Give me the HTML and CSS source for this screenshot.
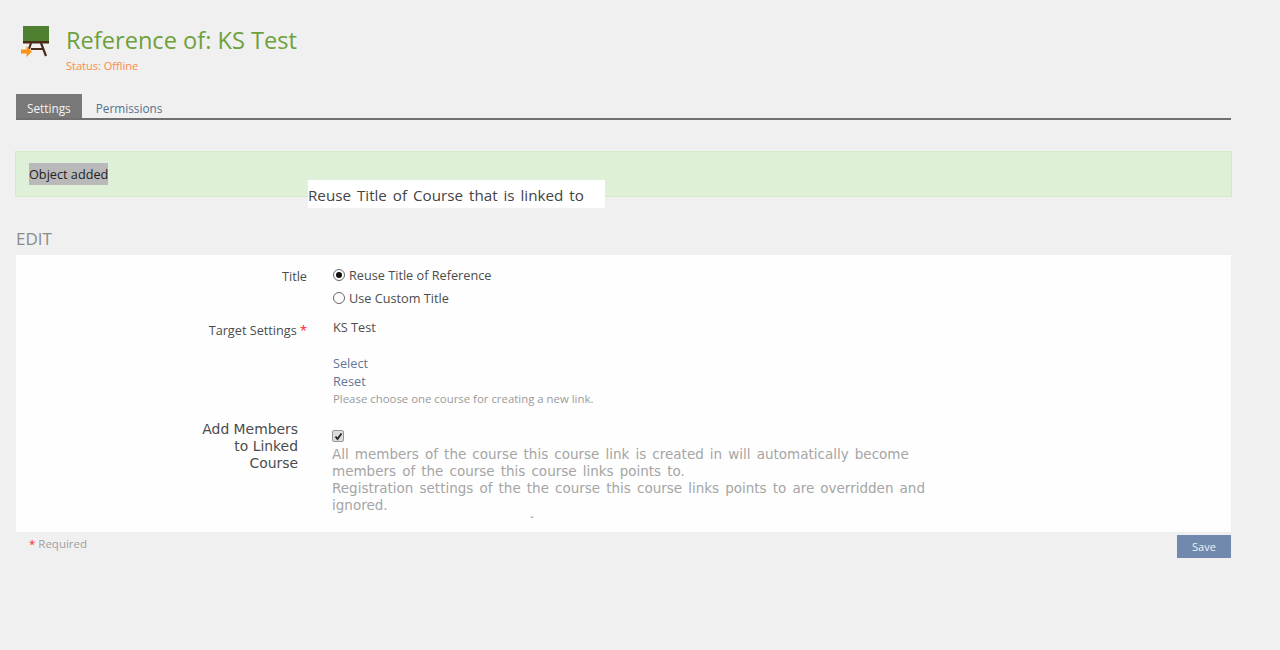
FILE: index.html
```html
<!DOCTYPE html>
<html>
  <head>
    <meta charset="utf-8">
    <title>Reference of: KS Test</title>
    <link rel="stylesheet" href="styles.css">
  </head>
  <body>
    <div id="content">
      <div class="page_header">
        <svg class="page_icon" width="32" height="36" viewBox="0 0 32 36">
          <rect x="3" y="1" width="26" height="15" fill="#4f7f31"/>
          <rect x="3" y="16" width="26" height="2.500" fill="#4a2c1a"/>
          <path d="M11 18 L9 24 M21 18 L26 31 M11 24 H24" stroke="#4a2c1a" stroke-width="2.200" fill="none"/>
          <path d="M1 24.500 H6.500 V21 L12 26.500 L6.500 32 V28.500 H1 Z" fill="#f7931e"/>
        </svg>
        <div>
          <h1>Reference of: KS Test</h1>
          <div class="status">Status: Offline</div>
        </div>
      </div>

      <div class="tabs">
        <span class="tab active">Settings</span>
        <span class="tab">Permissions</span>
      </div>

      <div class="message">
        <span class="selected">Object added</span>
      </div>
      <div class="tooltip">Reuse Title of Course that is linked to</div>

      <h2>EDIT</h2>
      <div class="form">
        <div class="row row_title">
          <div class="label">Title</div>
          <div class="field">
            <div class="option"><span class="radio checked"></span>Reuse Title of Reference</div>
            <div class="option"><span class="radio"></span>Use Custom Title</div>
          </div>
        </div>
        <div class="row row_target">
          <div class="label">Target Settings <span class="req">*</span></div>
          <div class="field">
            <div class="target_name">KS Test</div>
            <div class="link">Select</div>
            <div class="link">Reset</div>
            <div class="info">Please choose one course for creating a new link.</div>
          </div>
        </div>
        <div class="row row_members">
          <div class="label wide">Add Members<br>to Linked<br>Course</div>
          <div class="field">
            <span class="check">
              <svg width="9" height="9" viewBox="0 0 9 9"><path d="M1.500 4.500 L3.500 7 L7.500 1.500" stroke="#222" stroke-width="1.800" fill="none"/></svg>
            </span>
            <div class="help">All members of the course this course link is created in will automatically become members of the course this course links points to.<br>Registration settings of the the course this course links points to are overridden and ignored.</div>
            <div class="tick">˘</div>
          </div>
        </div>
      </div>

      <div class="footer">
        <div class="required"><span class="req">*</span> Required</div>
        <span class="button">Save</span>
      </div>
    </div>
  </body>
</html>
```

FILE: styles.css
```css
html, body {
    margin: 0;
    background: #f0f0f0;
}
body {
    font-family: "Open Sans", sans-serif;
    font-size: 12.700px;
    color: #4c4c4c;
}
#content {
    position: relative;
    width: 1215px;
    margin-left: 16px;
    padding-top: 24px;
}
.page_header {
    display: flex;
    height: 70px;
}
.page_icon {
    margin: 1px 0 0 4px;
    flex: none;
}
.page_header > div {
    margin-left: 14px;
}
h1 {
    margin: 0;
    font-size: 23.600px;
    font-weight: 400;
    line-height: 32px;
    color: #6ea03c;
}
.status {
    margin-top: 2px;
    line-height: 16px;
    font-size: 11px;
    color: #f98b4b;
}
.tabs {
    display: flex;
    height: 24px;
    border-bottom: 2px solid #6f6f6f;
}
.tab {
    padding: 0 14px;
    line-height: 28px;
    font-size: 11.800px;
    color: #55708f;
}
.tab.active {
    padding: 0 11px;
    background: #787878;
    color: #f4f4f4;
}
.message {
    margin: 31px -1px 0 -1px;
    height: 44px;
    padding-left: 13px;
    line-height: 44px;
    background: #dff0d8;
    border: 1px solid #d6e9c6;
    color: #222;
    font-size: 12.700px;
}
.selected {
    background: #b9b9b9;
    padding: 2px 0;
}
.tooltip {
    position: absolute;
    left: 292px;
    top: 180px;
    width: 297px;
    height: 28px;
    line-height: 31px;
    background: #fff;
    font-size: 15.200px;
    word-spacing: 2px;
    color: #444;
    white-space: nowrap;
}
h2 {
    margin: 30px 0 0 0;
    font-size: 17px;
    font-weight: 400;
    line-height: 24px;
    color: #8c8c8c;
}
.form {
    height: 277px;
    margin-top: 4px;
    padding-top: 10px;
    box-sizing: border-box;
    background: #fefefe;
}
.row {
    display: flex;
}
.label {
    width: 291px;
    text-align: right;
    line-height: 22px;
    flex: none;
}
.field {
    margin-left: 26px;
    position: relative;
}
.row_title {
    height: 55px;
}
.option {
    display: flex;
    align-items: center;
    height: 22px;
    margin-bottom: 1px;
    position: relative;
    top: -1px;
}
.radio {
    width: 10px;
    height: 10px;
    margin-right: 4px;
    border: 1px solid #666;
    border-radius: 50%;
    background: #fff;
    position: relative;
}
.radio.checked::after {
    content: "";
    position: absolute;
    left: 2px;
    top: 2px;
    width: 6px;
    height: 6px;
    border-radius: 50%;
    background: #111;
}
.row_target {
    height: 100px;
}
.row_target .label {
    line-height: 20px;
}
.target_name {
    height: 27px;
    line-height: 14px;
}
.link {
    height: 18px;
    line-height: 18px;
    color: #64769a;
}
.target_name + .link {
    margin-top: 7px;
}
.info {
    line-height: 18px;
    font-size: 11.400px;
    color: #9a9a9a;
}
.row_members .label.wide {
    width: 282px;
    padding-top: 1px;
    font-family: "DejaVu Sans", sans-serif;
    font-size: 13.900px;
    line-height: 17px;
}
.row_members .field {
    margin-left: 34px;
    width: 600px;
}
.check {
    display: flex;
    align-items: center;
    justify-content: center;
    width: 10px;
    height: 10px;
    margin: 10px 0 0 0;
    background: #ddd;
    border: 1px solid #999;
    border-radius: 2px;
}
.help {
    margin-top: 4px;
    font-family: "DejaVu Sans", sans-serif;
    font-size: 13.500px;
    word-spacing: 1.800px;
    line-height: 17px;
    color: #a5a5a5;
}
.tick {
    position: absolute;
    left: 198px;
    top: 96px;
    font-size: 10px;
    line-height: 10px;
    color: #888;
}
.footer {
    display: flex;
    justify-content: space-between;
    margin-top: 3px;
}
.required {
    line-height: 18px;
    margin-left: 13px;
    font-size: 11.500px;
    color: #a0a0a0;
}
.req {
    color: #f44;
    font-weight: 600;
}
.button {
    width: 54px;
    height: 23px;
    line-height: 23px;
    text-align: center;
    font-size: 11px;
    background: #7189ad;
    color: #f0f0f0;
}
```
